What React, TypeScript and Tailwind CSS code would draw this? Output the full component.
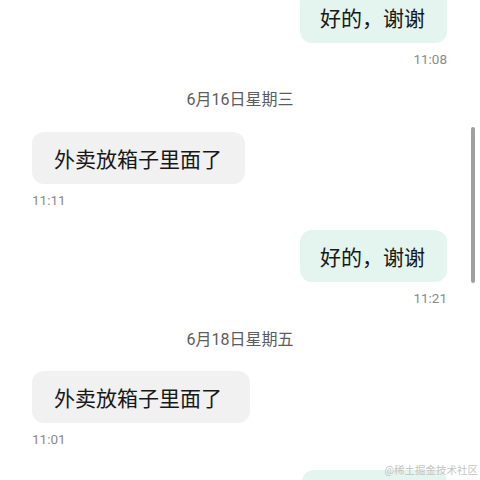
const font = { fontFamily: "Roboto, 'Noto Sans CJK SC', sans-serif" };

function Outgoing({ text, time }: { text: string; time?: string }) {
  return (
    <div className="flex flex-col items-end pr-[33px]">
      <div className="flex h-[52px] w-[147px] items-center rounded-[12px] bg-[#e3f5ee] pl-[20px] pt-[5px] text-[21px] text-[#181818]">
        {text}
      </div>
      {time && <div className="mt-[8px] h-[16px] text-[13.5px] leading-[16px] text-[#8a8a8a]">{time}</div>}
    </div>
  );
}

function Incoming({ text, time, width }: { text: string; time: string; width: string }) {
  return (
    <div className="flex flex-col items-start pl-[32px]">
      <div className={`flex h-[52px] items-center rounded-[12px] bg-[#f1f1f1] pl-[22px] pt-[5px] text-[21px] text-[#181818] ${width}`}>
        {text}
      </div>
      <div className="mt-[8px] h-[16px] text-[13.5px] leading-[16px] text-[#8a8a8a]">{time}</div>
    </div>
  );
}

function DateLabel({ text }: { text: string }) {
  return <div className="h-[20px] text-center text-[16px] leading-[20px] text-[#5c5c5c]">{text}</div>;
}

export default function App() {
  return (
    <div className="relative h-[480px] w-[480px] overflow-hidden bg-white" style={font}>
      <div className="mt-[-9px] flex flex-col">
        <Outgoing text="好的，谢谢" time="11:08" />
        <div className="mt-[23px]">
          <DateLabel text="6月16日星期三" />
        </div>
        <div className="mt-[22px]">
          <Incoming text="外卖放箱子里面了" time="11:11" width="w-[213px]" />
        </div>
        <div className="mt-[22px]">
          <Outgoing text="好的，谢谢" time="11:21" />
        </div>
        <div className="mt-[24px]">
          <DateLabel text="6月18日星期五" />
        </div>
        <div className="mt-[21px]">
          <Incoming text="外卖放箱子里面了" time="11:01" width="w-[218px]" />
        </div>
        <div className="mt-[23px] flex justify-end pr-[33px]">
          <div className="h-[52px] w-[145px] rounded-[12px] bg-[#e3f5ee]" />
        </div>
      </div>

      {/* scrollbar */}
      <div className="absolute left-[471px] top-[127px] h-[156px] w-[4px] rounded-full bg-[#a0a0a0]" />

      {/* watermark */}
      <div className="absolute right-[2px] top-[463px] text-[10.5px] leading-[16px] text-[#c4c4c4]">
        @稀土掘金技术社区
      </div>
    </div>
  );
}
